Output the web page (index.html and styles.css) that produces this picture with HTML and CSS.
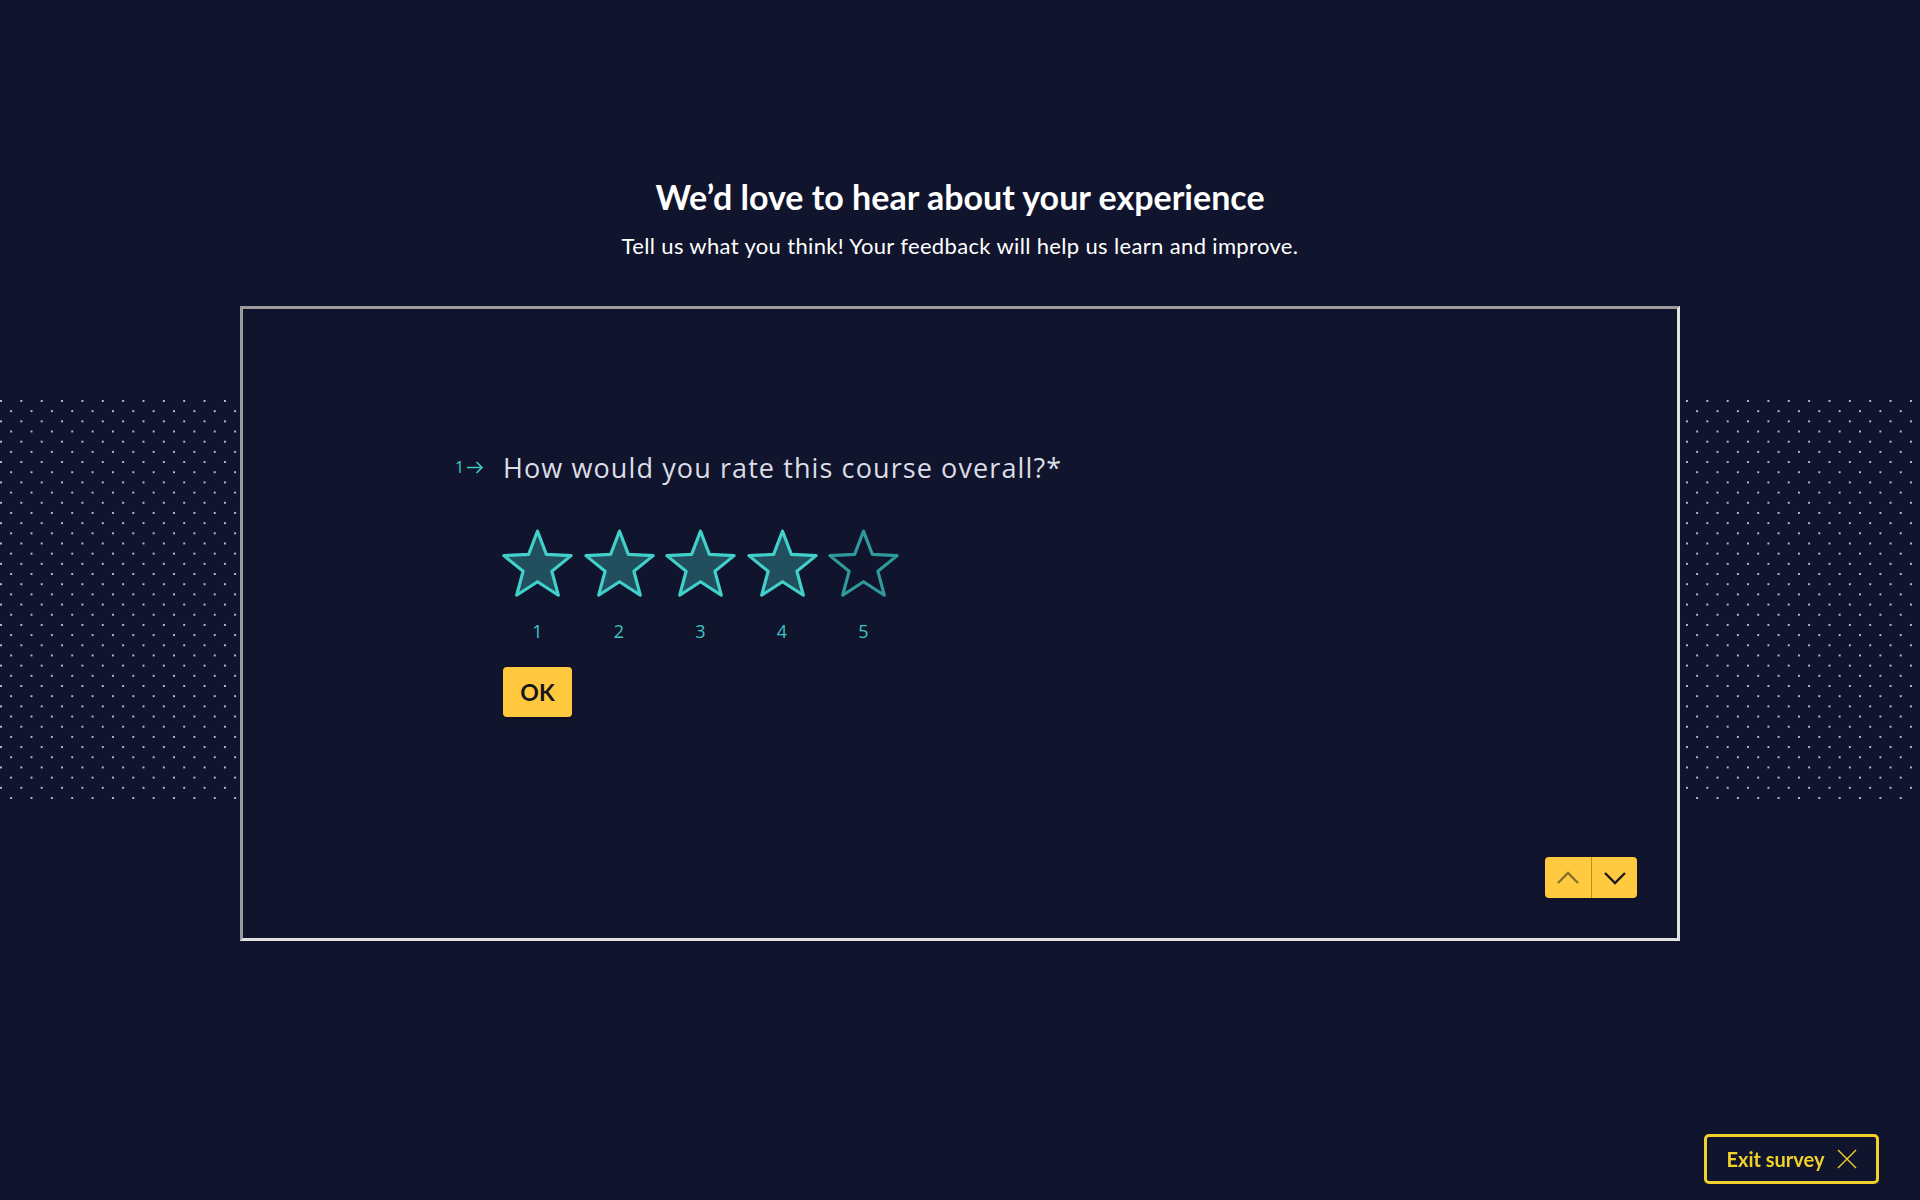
FILE: index.html
```html
<!DOCTYPE html>
<html lang="en">
<head>
  <meta charset="UTF-8">
  <title>Course Feedback</title>
  <link rel="stylesheet" href="styles.css">
</head>
<body>

  <header class="intro">
    <h1 class="intro-title">We’d love to hear about your experience</h1>
    <p class="intro-text">Tell us what you think! Your feedback will help us learn and improve.</p>
  </header>

  <div class="survey-row">
    <div class="dots dots-left"></div>

    <div class="survey-box">
      <div class="question">
        <div class="question-head">
          <span class="question-num">1
            <svg width="18" height="13" viewBox="0 0 18 13"><path d="M1 6.5h15M10.5 1l5.5 5.5-5.5 5.5" fill="none" stroke="#3ec9c6" stroke-width="1.6"/></svg>
          </span>
          <h2 class="question-title">How would you rate this course overall?*</h2>
        </div>

        <div class="rating">
          <!-- four selected, last one empty -->
          <div class="rating-item">
            <svg class="star on" width="75" height="73" viewBox="0 0 72 70"><path d="M36 3L44.5 25.3 68.3 26.5 49.8 41.5 56 64.5 36 51.5 16 64.5 22.2 41.5 3.7 26.5 27.5 25.3Z"/></svg>
            <span class="rating-num">1</span>
          </div>
          <div class="rating-item">
            <svg class="star on" width="75" height="73" viewBox="0 0 72 70"><path d="M36 3L44.5 25.3 68.3 26.5 49.8 41.5 56 64.5 36 51.5 16 64.5 22.2 41.5 3.7 26.5 27.5 25.3Z"/></svg>
            <span class="rating-num">2</span>
          </div>
          <div class="rating-item">
            <svg class="star on" width="75" height="73" viewBox="0 0 72 70"><path d="M36 3L44.5 25.3 68.3 26.5 49.8 41.5 56 64.5 36 51.5 16 64.5 22.2 41.5 3.7 26.5 27.5 25.3Z"/></svg>
            <span class="rating-num">3</span>
          </div>
          <div class="rating-item">
            <svg class="star on" width="75" height="73" viewBox="0 0 72 70"><path d="M36 3L44.5 25.3 68.3 26.5 49.8 41.5 56 64.5 36 51.5 16 64.5 22.2 41.5 3.7 26.5 27.5 25.3Z"/></svg>
            <span class="rating-num">4</span>
          </div>
          <div class="rating-item">
            <svg class="star" width="75" height="73" viewBox="0 0 72 70"><path d="M36 3L44.5 25.3 68.3 26.5 49.8 41.5 56 64.5 36 51.5 16 64.5 22.2 41.5 3.7 26.5 27.5 25.3Z"/></svg>
            <span class="rating-num">5</span>
          </div>
        </div>

        <button class="ok-btn">OK</button>
      </div>

      <div class="nav">
        <button class="nav-btn disabled">
          <svg width="24" height="14" viewBox="0 0 24 14"><path d="M2 12L12 2l10 10" fill="none" stroke="#1a1a1a" stroke-width="2.4"/></svg>
        </button>
        <button class="nav-btn">
          <svg width="24" height="14" viewBox="0 0 24 14"><path d="M2 2l10 10L22 2" fill="none" stroke="#1a1a1a" stroke-width="2.4"/></svg>
        </button>
      </div>
    </div>

    <div class="dots dots-right"></div>
  </div>

  <button class="exit-btn">
    Exit survey
    <svg width="20" height="20" viewBox="0 0 20 20"><path d="M1 1l18 18M19 1L1 19" fill="none" stroke="#f0d02a" stroke-width="1.4"/></svg>
  </button>

</body>
</html>
```

FILE: styles.css
```css
body {
  font-family: 'Lato', 'Open Sans', sans-serif;
  background: #10152d;
  color: #ffffff;
  margin: 0;
  min-height: 1200px;
}
button {
  font-family: inherit;
  border: none;
  cursor: pointer;
}
.intro {
  text-align: center;
  padding-top: 178px;
}
.intro-title {
  font-size: 34px;
  font-weight: 700;
  line-height: 38px;
  margin: 0 0 16px;
}
.intro-text {
  font-size: 22px;
  line-height: 28px;
  letter-spacing: 0.35px;
  margin: 0;
}
.survey-row {
  display: flex;
  margin-top: 46px;
}
.dots {
  flex: 0 0 auto;
  height: 400px;
  margin-top: 94px;
  background-image:
    radial-gradient(circle at 1px 1px, rgba(196, 204, 232, 0.9) 0.9px, transparent 1.4px),
    radial-gradient(circle at 1px 1px, rgba(196, 204, 232, 0.9) 0.9px, transparent 1.4px);
  background-size: 20.36px 20.36px;
  background-position: 0 0, 10.18px 10.18px;
}
.dots-left {
  width: 237px;
  margin-right: 3px;
}
.dots-right {
  width: 234px;
  margin-left: 6px;
}
.survey-box {
  box-sizing: border-box;
  width: 1440px;
  min-height: 635px;
  background: #10152d;
  border: 3px solid;
  border-color: #9c9c9c #e2e2e2 #e2e2e2 #9c9c9c;
  display: flex;
  flex-direction: column;
  padding: 141px 40px 40px 260px;
}
.question-head {
  display: flex;
  align-items: center;
  height: 34px;
}
.question-num {
  display: flex;
  align-items: center;
  gap: 2px;
  margin-left: -48px;
  width: 48px;
  color: #3ec9c6;
  font-family: 'Open Sans', sans-serif;
  font-size: 16px;
}
.question-title {
  font-family: 'Open Sans', sans-serif;
  font-size: 27px;
  font-weight: 400;
  color: #dcdee6;
  margin: 0;
  letter-spacing: 1.1px;
}
.rating {
  display: flex;
  gap: 6.5px;
  margin-top: 44px;
  margin-left: -3px;
}
.rating-item {
  display: flex;
  flex-direction: column;
  align-items: center;
  width: 75px;
}
.star path {
  fill: none;
  stroke: #2f9a9c;
  stroke-width: 3;
  stroke-linejoin: round;
}
.star.on path {
  fill: #224f5d;
  stroke: #42d0cb;
}
.rating-num {
  margin-top: 18px;
  font-family: 'Open Sans', sans-serif;
  font-size: 18px;
  line-height: 24px;
  color: #3ec4c2;
}
.ok-btn {
  display: block;
  margin-top: 24px;
  width: 69px;
  height: 50px;
  border-radius: 4px;
  background: #ffc83e;
  color: #15161c;
  font-size: 23px;
  font-weight: 700;
  box-shadow: 0 2px 4px rgba(0, 0, 0, 0.25);
}
.nav {
  display: flex;
  align-self: flex-end;
  margin-top: auto;
  border-radius: 4px;
  overflow: hidden;
}
.nav-btn {
  width: 46px;
  height: 41px;
  background: #ffc940;
  display: flex;
  align-items: center;
  justify-content: center;
  padding: 0;
}
.nav-btn + .nav-btn {
  border-left: 1px solid #b98f22;
}
.nav-btn.disabled svg {
  opacity: 0.5;
}
.exit-btn {
  position: fixed;
  right: 41px;
  bottom: 16px;
  box-sizing: border-box;
  width: 175px;
  height: 50px;
  display: flex;
  align-items: center;
  justify-content: center;
  gap: 12px;
  background: transparent;
  border: 3px solid #f0d02a;
  border-radius: 5px;
  color: #f0d02a;
  font-size: 20px;
  font-weight: 700;
}
```
